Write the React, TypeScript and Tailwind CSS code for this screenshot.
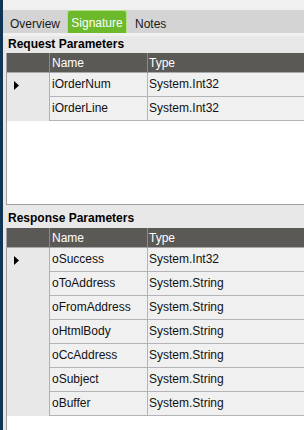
import React from 'react'

type Param = { name: string; type: string }

const requestParams: Param[] = [
    { name: 'iOrderNum', type: 'System.Int32' },
    { name: 'iOrderLine', type: 'System.Int32' },
]

const responseParams: Param[] = [
    { name: 'oSuccess', type: 'System.Int32' },
    { name: 'oToAddress', type: 'System.String' },
    { name: 'oFromAddress', type: 'System.String' },
    { name: 'oHtmlBody', type: 'System.String' },
    { name: 'oCcAddress', type: 'System.String' },
    { name: 'oSubject', type: 'System.String' },
    { name: 'oBuffer', type: 'System.String' },
]

function ParamGrid({ rows, height }: { rows: Param[]; height: string }) {
    return (
        <div className={`ml-[3px] border-l border-[#a0a0a0] bg-white ${height}`}>
            {/* en-tête */}
            <div className="grid grid-cols-[43px_98px_1fr] h-[19px] bg-[#5a5955] text-white">
                <div className="border-r border-[#8a8a8a]" />
                <div className="border-r border-[#8a8a8a] pl-[2px] leading-[20px]">Name</div>
                <div className="pl-[1px] leading-[20px]">Type</div>
            </div>
            <div className="border-t border-[#a8a8a8]">
                {rows.map((row, i) => (
                    <div key={row.name} className="grid grid-cols-[43px_98px_1fr] h-[24px]">
                        <div className="bg-[#e8e8e8] border-r border-[#b0b0b0] flex items-center pl-[7px]">
                            {i === 0 && (
                                <svg width="5" height="9" viewBox="0 0 5 9">
                                    <path d="M0 0 L5 4.5 L0 9 Z" fill="#000" />
                                </svg>
                            )}
                        </div>
                        <div className="bg-[#f0f0f0] border-r border-b border-[#b4b4b4] pl-[2px] pt-[2px] text-[#111]">{row.name}</div>
                        <div className="bg-[#f0f0f0] border-b border-[#b4b4b4] pl-[1px] pt-[2px] text-[#111]">{row.type}</div>
                    </div>
                ))}
            </div>
        </div>
    )
}

export default function App() {
    return (
        <div
            className="w-[304px] h-[430px] overflow-hidden flex text-[12px]"
            style={{ fontFamily: '"Liberation Sans", Arial, sans-serif' }}
        >
            <div className="w-[3px] shrink-0 bg-[#0f3454]" />
            <div className="flex-1 flex flex-col bg-[#e8e8e8] min-w-0">
                <div className="h-[10px] bg-[#f0f0f0]" />
                {/* onglets */}
                <div className="h-[23px] bg-[#d4d4d4] flex items-end">
                    <div className="w-[64px] h-[23px] pt-[5px] flex items-center justify-center text-[#1a1a1a]">Overview</div>
                    <div className="w-[60px] h-[23px] pt-[2px] flex items-center justify-center bg-[#6cb92c] border border-b-0 border-[#b6e08c] rounded-t-[3px] text-white">
                        Signature
                    </div>
                    <div className="px-[8px] h-[23px] pt-[5px] flex items-center text-[#1a1a1a]">Notes</div>
                </div>
                <div className="h-[3px] bg-[#f0f0f0]" />
                <div className="h-[17px] pl-[5px] font-bold text-black leading-[17px]">Request Parameters</div>
                <ParamGrid rows={requestParams} height="h-[152px] border-b" />
                <div className="h-[23px] pl-[5px] font-bold text-black leading-[26px]">Response Parameters</div>
                <ParamGrid rows={responseParams} height="flex-1" />
            </div>
        </div>
    )
}
